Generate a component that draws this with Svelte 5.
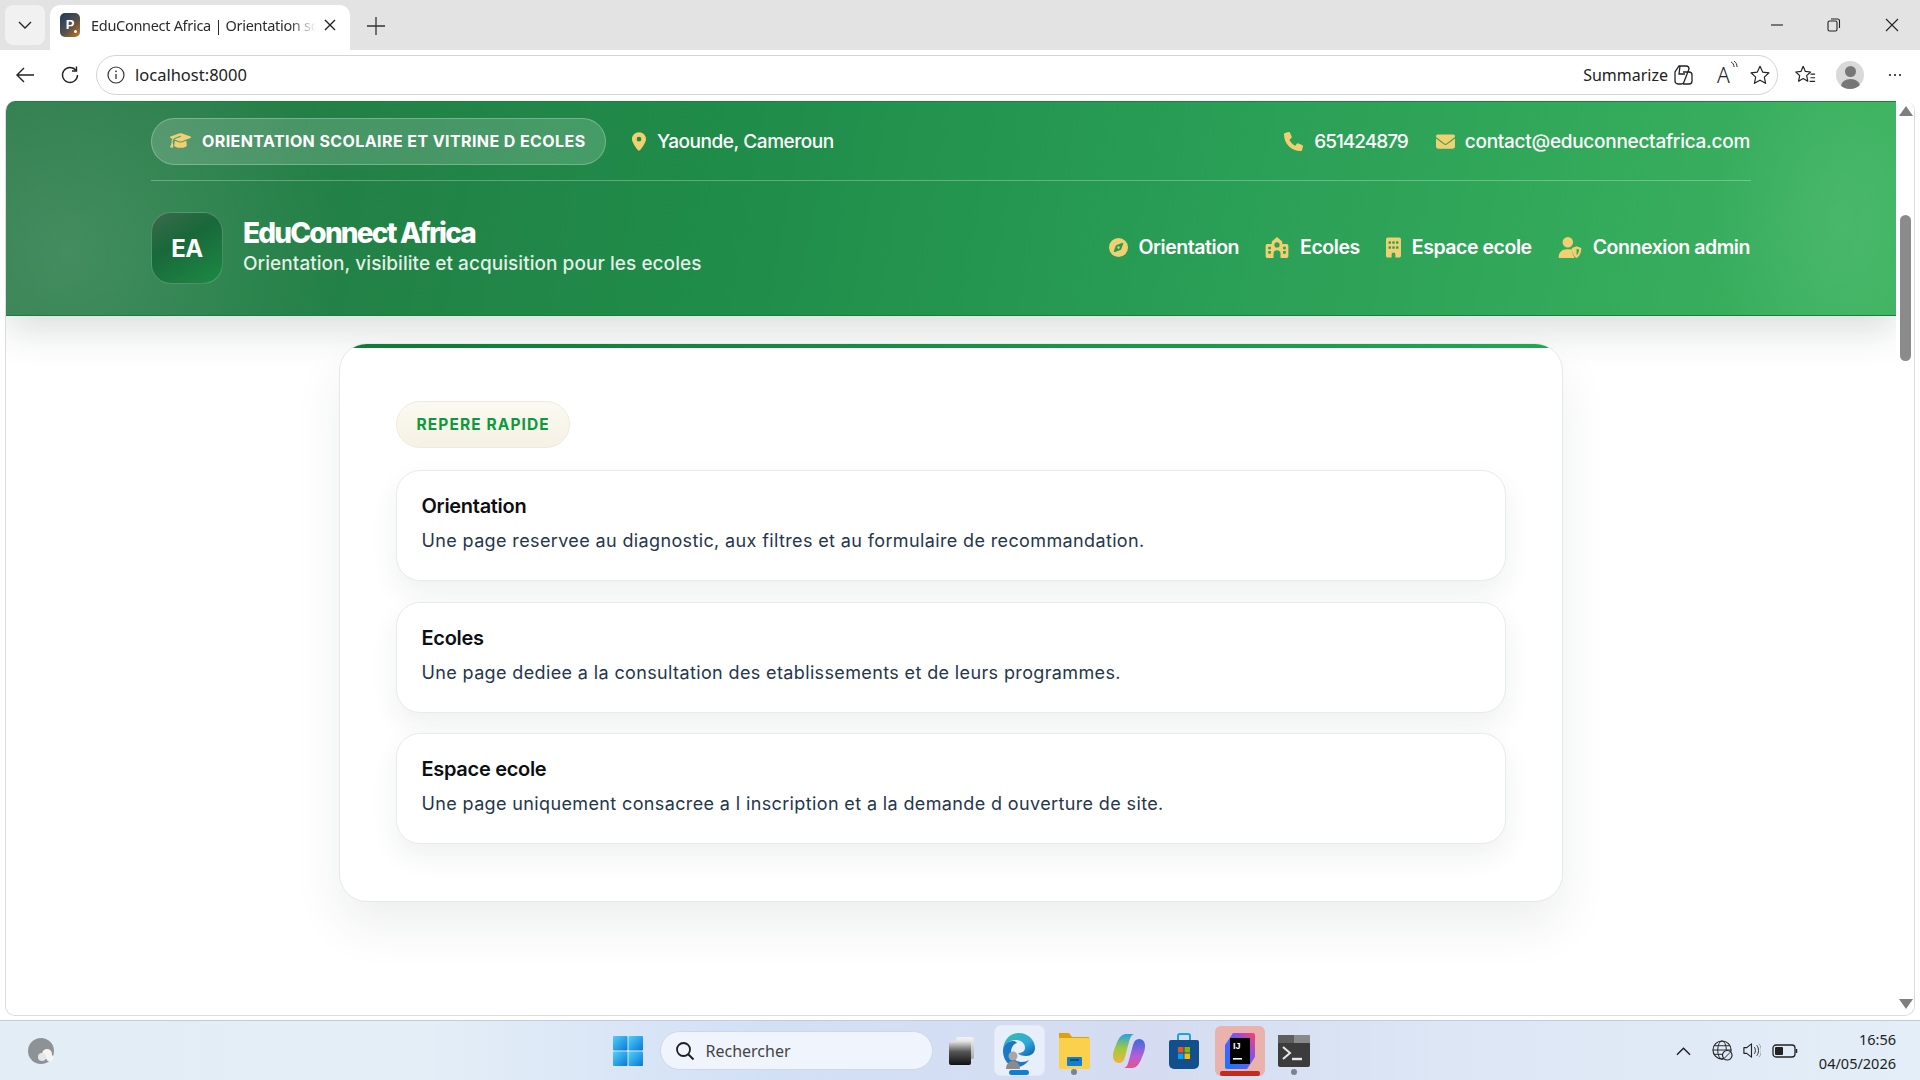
<script>
  const navLinks = [
    { label: 'Orientation', icon: 'compass' },
    { label: 'Ecoles', icon: 'school' },
    { label: 'Espace ecole', icon: 'building' },
    { label: 'Connexion admin', icon: 'admin' }
  ]

  const quickItems = [
    { title: 'Orientation', text: 'Une page reservee au diagnostic, aux filtres et au formulaire de recommandation.' },
    { title: 'Ecoles', text: 'Une page dediee a la consultation des etablissements et de leurs programmes.' },
    { title: 'Espace ecole', text: 'Une page uniquement consacree a l inscription et a la demande d ouverture de site.' }
  ]
</script>

{#snippet navIcon(name)}
  {#if name === 'compass'}
    <svg class="gold nav-ic" viewBox="0 0 512 512"><path d="M256 512A256 256 0 1 0 256 0a256 256 0 1 0 0 512zm50.7-186.9L162.4 380.6c-19.4 7.5-38.5-11.6-31-31l55.5-144.3c3.3-8.5 9.9-15.1 18.4-18.4l144.3-55.5c19.4-7.5 38.5 11.6 31 31L325.1 306.7c-3.2 8.5-9.9 15.1-18.4 18.4zM288 256a32 32 0 1 0 -64 0 32 32 0 1 0 64 0z" /></svg>
  {:else if name === 'school'}
    <svg class="gold nav-ic wide" viewBox="0 0 26 24"><path fill-rule="evenodd" d="M13 0l6 5v3h5a2 2 0 0 1 2 2v12a2 2 0 0 1-2 2h-7v-5a4 4 0 0 0-8 0v5H2a2 2 0 0 1-2-2V10a2 2 0 0 1 2-2h5V5zm0 6a3 3 0 1 0 0 6 3 3 0 0 0 0-6zM3 11v3h3v-3zm0 5v3h3v-3zm17-5v3h3v-3zm0 5v3h3v-3z" /></svg>
  {:else if name === 'building'}
    <svg class="gold nav-ic narrow" viewBox="0 0 384 512"><path d="M48 0C21.5 0 0 21.5 0 48V464c0 26.5 21.5 48 48 48h96V432c0-26.5 21.5-48 48-48s48 21.5 48 48v80h96c26.5 0 48-21.5 48-48V48c0-26.5-21.5-48-48-48H48zM64 240c0-8.8 7.2-16 16-16h32c8.8 0 16 7.2 16 16v32c0 8.8-7.2 16-16 16H80c-8.8 0-16-7.2-16-16V240zm112-16h32c8.8 0 16 7.2 16 16v32c0 8.8-7.2 16-16 16H176c-8.8 0-16-7.2-16-16V240c0-8.8 7.2-16 16-16zm80 16c0-8.8 7.2-16 16-16h32c8.8 0 16 7.2 16 16v32c0 8.8-7.2 16-16 16H272c-8.8 0-16-7.2-16-16V240zM80 96h32c8.8 0 16 7.2 16 16v32c0 8.8-7.2 16-16 16H80c-8.8 0-16-7.2-16-16V112c0-8.8 7.2-16 16-16zm80 16c0-8.8 7.2-16 16-16h32c8.8 0 16 7.2 16 16v32c0 8.8-7.2 16-16 16H176c-8.8 0-16-7.2-16-16V112zM272 96h32c8.8 0 16 7.2 16 16v32c0 8.8-7.2 16-16 16H272c-8.8 0-16-7.2-16-16V112c0-8.8 7.2-16 16-16z" /></svg>
  {:else}
    <svg class="gold nav-ic wide" viewBox="0 0 26 24"><circle cx="10.5" cy="6" r="6" /><path d="M9 14h3c1.200 0 2.300.2 3.300.5.1 3.300 1 6.600 3.300 9.500H1a1 1 0 0 1-1-1c0-5 4-9 9-9z" /><path d="M20.500 10.500l5.500 2.200c0 4.300-1.600 9-5.500 11.300-3.900-2.300-5.500-7-5.500-11.300zm0 3v7.400c1.800-1.500 2.800-3.900 3-6.300z" fill-rule="evenodd" /></svg>
  {/if}
{/snippet}

<div class="screen">
  <div class="tabstrip">
    <button class="tab-menu" aria-label="Tab actions">
      <svg viewBox="0 0 16 16" width="16" height="16"><path d="M2 5l6 6 6-6" fill="none" stroke="#222" stroke-width="1.300" /></svg>
    </button>
    <div class="tab">
      <span class="favicon">P<i></i></span>
      <span class="tab-title">EduConnect Africa | Orientation sc</span>
      <svg class="tab-close" viewBox="0 0 12 12" width="12" height="12"><path d="M1 1l10 10M11 1L1 11" stroke="#222" stroke-width="1.400" /></svg>
    </div>
    <svg class="new-tab" viewBox="0 0 18 18" width="18" height="18"><path d="M9 0v18M0 9h18" stroke="#333" stroke-width="1.300" /></svg>
    <div class="win-controls">
      <svg viewBox="0 0 12 12" width="12" height="12"><path d="M0 6h12" stroke="#222" stroke-width="1.100" /></svg>
      <svg viewBox="0 0 14 14" width="14" height="14"><rect x="1" y="3" width="9" height="10" rx="1.500" fill="none" stroke="#222" stroke-width="1.100" /><path d="M4 1h6.500A2 2 0 0 1 12.500 3v7" fill="none" stroke="#222" stroke-width="1.100" /></svg>
      <svg viewBox="0 0 14 14" width="14" height="14"><path d="M1 1l12 12M13 1L1 13" stroke="#222" stroke-width="1.100" /></svg>
    </div>
  </div>

  <div class="toolbar">
    <svg class="tool-ic" viewBox="0 0 20 20" width="20" height="20"><path d="M19 10H2M9 3l-7 7 7 7" fill="none" stroke="#222" stroke-width="1.400" /></svg>
    <svg class="tool-ic" viewBox="0 0 20 20" width="20" height="20"><path d="M16 5.500A7.500 7.500 0 1 0 17.500 10" fill="none" stroke="#222" stroke-width="1.400" /><path d="M16.500 1.500v4.500H12" fill="none" stroke="#222" stroke-width="1.400" /></svg>
    <div class="addressbar">
      <svg viewBox="0 0 18 18" width="18" height="18"><circle cx="9" cy="9" r="8" fill="none" stroke="#333" stroke-width="1.200" /><path d="M9 8v5" stroke="#333" stroke-width="1.300" /><circle cx="9" cy="5.300" r=".9" fill="#333" /></svg>
      <span class="url">localhost:8000</span>
      <span class="summarize">Summarize</span>
      <svg viewBox="0 0 24 24" width="24" height="24" class="copilot-line"><path d="M8 3h7a3 3 0 0 1 3 3l-5 13a3 3 0 0 1-3 2H7a3 3 0 0 1-3-3V9zM12 9h6a3 3 0 0 1 3 3v6a3 3 0 0 1-3 3h-6M9 3l-1 8h6" fill="none" stroke="#222" stroke-width="1.300" /></svg>
      <span class="read-aloud">A<svg viewBox="0 0 8 10" width="8" height="10"><path d="M1 1c2 1 3 2.500 3 5M4 0c2 1.500 3 3 3 6" fill="none" stroke="#333" /></svg></span>
      <svg viewBox="0 0 24 24" width="22" height="22"><path d="M12 2.500l2.900 6.300 6.900.8-5.100 4.700 1.400 6.800-6.100-3.400-6.100 3.400 1.400-6.800-5.100-4.700 6.900-.8z" fill="none" stroke="#222" stroke-width="1.300" stroke-linejoin="round" /></svg>
    </div>
    <svg class="fav-list" viewBox="0 0 24 24" width="22" height="22"><path d="M10 2.500l2.400 5.600 5.600.6-4.200 4 1.200 6.100-5-3-5 3 1.200-6.100-4.200-4 5.600-.6z" fill="none" stroke="#222" stroke-width="1.300" stroke-linejoin="round" /><path d="M18 11h5M18 15h5M17 19h6" stroke="#222" stroke-width="1.200" /></svg>
    <span class="avatar"><i></i><b></b></span>
    <svg class="dots" viewBox="0 0 14 4" width="14" height="4"><circle cx="2" cy="2" r="1.100" fill="#222" /><circle cx="7" cy="2" r="1.100" fill="#222" /><circle cx="12" cy="2" r="1.100" fill="#222" /></svg>
  </div>

  <div class="viewport">
    <div class="frame">
      <div class="page">
        <header class="site-header">
          <div class="header-inner">
            <div class="topline">
              <span class="badge">
                <svg class="gold cap" viewBox="0 0 640 512"><path d="M320 32c-8.100 0-16.100 1.400-23.700 4.100L15.800 137.400C6.300 140.900 0 149.900 0 160s6.300 19.100 15.800 22.600l57.900 20.900C57.300 229.300 48 259.800 48 291.900v28.100c0 28.400-10.800 57.700-22.300 80.800c-6.500 13-13.900 25.800-22.500 37.600C0 442.700-.9 448.300 .9 453.400s6 8.900 11.200 10.200l64 16c4.200 1.100 8.700 .3 12.400-2s6.300-6.100 7.100-10.400c8.600-42.800 4.300-81.200-2.100-108.700C90.300 344.300 86 329.800 80 316.500V291.900c0-30.200 10.200-58.700 27.900-81.500c12.900-15.500 29.600-28 49.200-35.700l157-61.700c8.200-3.200 17.500 .8 20.700 9s-.8 17.500-9 20.700l-157 61.700c-12.400 4.900-23.300 12.400-32.200 21.600l159.600 57.600c7.600 2.700 15.600 4.100 23.700 4.100s16.100-1.400 23.700-4.100L624.200 182.600c9.500-3.400 15.800-12.500 15.800-22.600s-6.300-19.100-15.800-22.600L343.700 36.100C336.100 33.400 328.100 32 320 32zM128 408c0 35.300 86 72 192 72s192-36.700 192-72L496.700 262.600 354.500 314c-11.100 4-22.800 6-34.500 6s-23.500-2-34.500-6L143.300 262.600 128 408z" /></svg>
                ORIENTATION SCOLAIRE ET VITRINE D ECOLES
              </span>
              <span class="info place">
                <svg class="gold pin" viewBox="0 0 384 512"><path d="M215.700 499.200C267 435 384 279.400 384 192C384 86 298 0 192 0S0 86 0 192c0 87.400 117 243 168.300 307.200c12.300 15.300 35.100 15.300 47.400 0zM192 128a64 64 0 1 1 0 128 64 64 0 1 1 0-128z" /></svg>
                Yaounde, Cameroun
              </span>
              <span class="info phone">
                <svg class="gold phone-ic" viewBox="0 0 512 512"><path d="M164.900 24.600c-7.700-18.600-28-28.500-47.400-23.200l-88 24C12.100 30.200 0 46 0 64C0 311.400 200.600 512 448 512c18 0 33.800-12.100 38.600-29.500l24-88c5.300-19.400-4.600-39.700-23.200-47.400l-96-40c-16.300-6.800-35.200-2.100-46.300 11.600L304.700 368C234.300 334.700 177.300 277.700 144 207.300L193.300 167c13.700-11.200 18.400-30 11.600-46.300l-40-96z" /></svg>
                651424879
              </span>
              <span class="info mail-item">
                <svg class="gold mail" viewBox="0 0 512 512"><path d="M48 64C21.500 64 0 85.500 0 112c0 15.100 7.100 29.300 19.200 38.400L236.800 313.600c11.400 8.500 27 8.500 38.400 0L492.800 150.400c12.100-9.100 19.200-23.300 19.200-38.400c0-26.500-21.500-48-48-48H48zM0 176V384c0 35.300 28.700 64 64 64H448c35.300 0 64-28.700 64-64V176L294.400 339.200c-22.800 17.100-54 17.100-76.800 0L0 176z" /></svg>
                contact@educonnectafrica.com
              </span>
            </div>
            <div class="brandline">
              <div class="logo">EA</div>
              <div class="brand-text">
                <div class="brand-name">EduConnect Africa</div>
                <div class="brand-sub">Orientation, visibilite et acquisition pour les ecoles</div>
              </div>
              <nav class="nav">
                {#each navLinks as link}
                  <span class="nav-link">{@render navIcon(link.icon)}{link.label}</span>
                {/each}
              </nav>
            </div>
          </div>
        </header>

        <main class="panel">
          <span class="eyebrow">REPERE RAPIDE</span>
          <div class="stack">
            {#each quickItems as item}
              <article class="quick">
                <h3>{item.title}</h3>
                <p>{item.text}</p>
              </article>
            {/each}
          </div>
        </main>
      </div>

      <div class="scrollbar">
        <span class="arrow up"></span>
        <span class="thumb"></span>
        <span class="arrow down"></span>
      </div>
    </div>
  </div>

  <div class="taskbar">
    <div class="task-left">
      <svg viewBox="0 0 28 28" width="28" height="28"><ellipse cx="13" cy="14" rx="13" ry="13" fill="#8d9297" /><circle cx="19" cy="17" r="5" fill="#f4f4f4" /><circle cx="14" cy="20" r="4" fill="#e6e6e6" /><circle cx="22" cy="21" r="3.500" fill="#f4f4f4" /></svg>
    </div>
    <div class="task-center">
      <svg class="start" viewBox="0 0 30 30" width="30" height="30">
        <defs>
          <linearGradient id="winA" x1="0" y1="0" x2="1" y2="1"><stop offset="0" stop-color="#4fd0f8" /><stop offset="1" stop-color="#0a78d8" /></linearGradient>
        </defs>
        <rect x="0" y="0" width="14.500" height="14.500" rx="1" fill="url(#winA)" />
        <rect x="15.500" y="0" width="14.500" height="14.500" rx="1" fill="url(#winA)" />
        <rect x="0" y="15.500" width="14.500" height="14.500" rx="1" fill="url(#winA)" />
        <rect x="15.500" y="15.500" width="14.500" height="14.500" rx="1" fill="url(#winA)" />
      </svg>
      <div class="search">
        <svg viewBox="0 0 20 20" width="20" height="20"><circle cx="8.500" cy="8.500" r="6.500" fill="none" stroke="#1e1e1e" stroke-width="1.800" /><path d="M13 13l5.500 5.500" stroke="#1e1e1e" stroke-width="2" /></svg>
        <span>Rechercher</span>
      </div>
      <span class="slot taskview"><i></i><b></b></span>
      <span class="slot edge">
        <svg viewBox="0 0 32 36" width="32" height="36">
          <defs>
            <linearGradient id="edgeA" x1="0" y1="0" x2="1" y2="1"><stop offset="0" stop-color="#35c1a2" /><stop offset=".6" stop-color="#2fa8de" /><stop offset="1" stop-color="#0c59a4" /></linearGradient>
          </defs>
          <path d="M16 0c9 0 16 7 16 15 0 5-4 8-9 8-4 0-7-1-8-3 4 0 7-2 7-5 0-4-3-8-9-8-7 0-13 5-13 11C0 7 7 0 16 0z" fill="url(#edgeA)" />
          <path d="M0 18c0-6 5-10 10-10 3 0 4 2 4 2-4 1-6 5-6 9 0 6 5 10 11 10 3 0 5-1 7-2-3 4-7 7-12 7C6 34 0 27 0 18z" fill="#1b78c8" />
          <circle cx="10" cy="23" r="4.500" fill="#a8a8a8" /><path d="M3 36c0-5 3-8 7-8s7 3 7 8z" fill="#8b8b8b" />
        </svg>
        <em class="run active"></em>
      </span>
      <span class="slot">
        <svg viewBox="0 0 32 36" width="32" height="36"><path d="M1 0h10l3 4h17v6H1z" fill="#dfa10b" /><rect x="1" y="5" width="31" height="31" rx="1" fill="#fbd04a" /><rect x="9" y="24" width="15" height="9" rx="1" fill="#0f7fd0" /><path d="M12 27h9" stroke="#083f78" stroke-width="1.500" /></svg>
        <em class="run"></em>
      </span>
      <span class="slot">
        <svg viewBox="0 0 32 36" width="32" height="36">
          <defs>
            <linearGradient id="copA" x1="0" y1="0" x2="0" y2="1"><stop offset="0" stop-color="#27a2e8" /><stop offset=".5" stop-color="#9fca3a" /><stop offset="1" stop-color="#f2b33d" /></linearGradient>
            <linearGradient id="copB" x1="0" y1="0" x2="0" y2="1"><stop offset="0" stop-color="#3b6be0" /><stop offset=".6" stop-color="#b65dd8" /><stop offset="1" stop-color="#e2548c" /></linearGradient>
          </defs>
          <path d="M13 1h8c-3 1-4 4-5 8l-4 15c-1 4-3 6-6 6-4 0-6-3-6-7 0-3 1-7 3-11 2-6 5-11 10-11z" fill="url(#copA)" />
          <path d="M19 35h-8c3-1 4-4 5-8l4-15c1-4 3-6 6-6 4 0 6 3 6 7 0 3-1 7-3 11-2 6-5 11-10 11z" fill="url(#copB)" />
        </svg>
      </span>
      <span class="slot">
        <svg viewBox="0 0 30 36" width="30" height="36"><path d="M9 8V3a2 2 0 0 1 2-2h8a2 2 0 0 1 2 2v5" fill="none" stroke="#19a6dc" stroke-width="2" /><path d="M2 7h26a2 2 0 0 1 2 2v22a5 5 0 0 1-5 5H5a5 5 0 0 1-5-5V9a2 2 0 0 1 2-2z" fill="#144f8d" /><rect x="9" y="14" width="5.500" height="5.500" fill="#f25022" /><rect x="15.500" y="14" width="5.500" height="5.500" fill="#7fba00" /><rect x="9" y="20.500" width="5.500" height="5.500" fill="#00a4ef" /><rect x="15.500" y="20.500" width="5.500" height="5.500" fill="#ffb900" /></svg>
      </span>
      <span class="slot idea">
        <svg viewBox="0 0 30 36" width="30" height="36">
          <defs>
            <linearGradient id="ijA" x1="0" y1="1" x2="1" y2="0"><stop offset="0" stop-color="#087cfa" /><stop offset=".55" stop-color="#6b57ff" /><stop offset="1" stop-color="#ff3d6e" /></linearGradient>
          </defs>
          <path d="M8 0h20a2 2 0 0 1 2 2v22l-8 12H2a2 2 0 0 1-2-2V12z" fill="url(#ijA)" />
          <rect x="5" y="5" width="20" height="26" fill="#000" />
          <text x="8" y="16" class="ij">IJ</text>
          <rect x="8" y="25" width="9" height="1.600" fill="#fff" />
        </svg>
        <em class="run red"></em>
      </span>
      <span class="slot last">
        <svg viewBox="0 0 32 32" width="32" height="32"><rect width="32" height="32" rx="2" fill="#3c3c3c" /><rect width="32" height="8" fill="#8a8a8a" /><rect width="16" height="8" fill="#5e5e5e" /><path d="M5 12l7 6-7 6" fill="none" stroke="#e8e8e8" stroke-width="2" /><path d="M14 24h10" stroke="#e8e8e8" stroke-width="2.400" /></svg>
        <em class="run"></em>
      </span>
    </div>
    <div class="task-right">
      <svg viewBox="0 0 16 10" width="15" height="10"><path d="M1 9l7-7 7 7" fill="none" stroke="#1e1e1e" stroke-width="1.500" /></svg>
      <svg class="tray-globe" viewBox="0 0 22 22" width="21" height="21"><circle cx="10.500" cy="10.500" r="9.500" fill="none" stroke="#222" stroke-width="1.200" /><ellipse cx="10.500" cy="10.500" rx="4.500" ry="9.500" fill="none" stroke="#222" /><path d="M1 10.500h19M2.500 6h16M2.500 15h11" stroke="#222" /><circle cx="16" cy="16" r="5" fill="#dde7f6" stroke="#222" stroke-width="1.200" /><path d="M13 19l6-6" stroke="#222" /></svg>
      <svg class="tray-sound" viewBox="0 0 20 20" width="19" height="19"><path d="M2 7v6h3l5 4V3L5 7z" fill="none" stroke="#222" stroke-width="1.200" stroke-linejoin="round" /><path d="M13 6.500c1.500 2 1.500 5 0 7M15.500 4.500c2.500 3 2.500 8 0 11" fill="none" stroke="#222" /><path d="M18 3c3 4 3 10 0 14" fill="none" stroke="#9aa3ad" /></svg>
      <svg class="tray-batt" viewBox="0 0 26 14" width="26" height="14"><rect x="1" y="1" width="22" height="12" rx="3" fill="none" stroke="#222" stroke-width="1.300" /><rect x="3" y="3" width="8" height="8" rx="1" fill="#222" /><path d="M24.500 5v4" stroke="#222" stroke-width="1.500" /></svg>
      <div class="clock"><span>16:56</span><span>04/05/2026</span></div>
    </div>
  </div>
</div>

<style>
  :global(body) {
    margin: 0;
    background: #fff;
  }
  .screen {
    width: 1920px;
    height: 1080px;
    display: flex;
    flex-direction: column;
    overflow: hidden;
    background: #fff;
    font-family: 'Noto Sans', 'Open Sans', sans-serif;
  }
  .tabstrip {
    height: 50px;
    flex: none;
    display: flex;
    align-items: flex-end;
    background: #e3e3e3;
    padding-left: 5px;
    box-sizing: border-box;
  }
  .tab-menu {
    width: 40px;
    height: 40px;
    margin: 0 5px 5px 0;
    border: 0;
    border-radius: 8px;
    background: #f1f1f1;
    display: flex;
    align-items: center;
    justify-content: center;
    padding: 0;
  }
  .tab {
    width: 300px;
    height: 45px;
    box-sizing: border-box;
    background: #fff;
    border-radius: 10px 10px 0 0;
    display: flex;
    align-items: center;
    padding: 0 14px 6px 10px;
    font-size: 14.500px;
    color: #2b2b2b;
  }
  .favicon {
    position: relative;
    flex: none;
    width: 20px;
    height: 24px;
    border-radius: 5px;
    background: linear-gradient(135deg, #1f3a5c, #55504a 55%, #c9771f);
    color: #fff;
    font: 700 13px 'Liberation Sans', sans-serif;
    line-height: 24px;
    text-align: center;
    margin-right: 11px;
  }
  .favicon i {
    position: absolute;
    right: 3px;
    bottom: 4px;
    width: 3px;
    height: 3px;
    background: #fff;
    border-radius: 50%;
  }
  .tab-title {
    flex: 1;
    min-width: 0;
    white-space: nowrap;
    letter-spacing: -0.3px;
    -webkit-mask-image: linear-gradient(90deg, #000 88%, transparent);
    mask-image: linear-gradient(90deg, #000 88%, transparent);
  }
  .tab-close {
    flex: none;
    margin-left: 8px;
  }
  .new-tab {
    margin: 0 0 15px 17px;
  }
  .win-controls {
    margin-left: auto;
    display: flex;
    align-items: center;
    gap: 44px;
    padding-right: 21px;
    height: 50px;
  }
  .toolbar {
    height: 51px;
    flex: none;
    box-sizing: border-box;
    background: #fff;
    display: flex;
    align-items: center;
    padding: 0 0 1px 15px;
  }
  .tool-ic {
    flex: none;
    margin-right: 25px;
  }
  .tool-ic + .tool-ic {
    margin-right: 16px;
  }
  .addressbar {
    width: 1682px;
    height: 40px;
    flex: none;
    box-sizing: border-box;
    border: 1px solid #d4d4d4;
    border-radius: 20px;
    display: flex;
    align-items: center;
    padding: 0 6px 0 10px;
    color: #222;
  }
  .url {
    margin-left: 10px;
    font-size: 16.500px;
    line-height: 20px;
    padding-bottom: 1px;
  }
  .summarize {
    margin-left: auto;
    font-size: 16px;
    letter-spacing: 0;
  }
  .copilot-line {
    margin: 0 22px 0 3px;
  }
  .read-aloud {
    display: flex;
    font-size: 21px;
    width: 28px;
    font-weight: 300;
    margin-right: 4px;
    color: #222;
  }
  .fav-list {
    margin-left: 16px;
    flex: none;
  }
  .avatar {
    position: relative;
    flex: none;
    width: 28px;
    height: 28px;
    border-radius: 50%;
    background: #d9d9d9;
    margin-left: 20px;
    overflow: hidden;
  }
  .avatar i {
    position: absolute;
    left: 9px;
    top: 5px;
    width: 11px;
    height: 11px;
    border-radius: 50%;
    background: #777;
  }
  .avatar b {
    position: absolute;
    left: 5px;
    top: 18px;
    width: 19px;
    height: 14px;
    border-radius: 50%;
    background: #777;
  }
  .dots {
    flex: none;
    margin-left: 24px;
  }
  .viewport {
    flex: 1;
    min-height: 0;
    padding: 0 5px 4px 5px;
    background: #fff;
    display: flex;
  }
  .frame {
    flex: 1;
    display: flex;
    min-width: 0;
    border: 1px solid #dcdcdc;
    border-top: 0;
    border-radius: 10px;
    overflow: hidden;
  }
  .page {
    flex: 1;
    min-width: 0;
    overflow: hidden;
    background: #fff;
    font-family: Inter, sans-serif;
  }
  .scrollbar {
    position: relative;
    width: 18px;
    flex: none;
    background: #fff;
  }
  .arrow {
    position: absolute;
    left: 3px;
    width: 0;
    height: 0;
    border-left: 7px solid transparent;
    border-right: 7px solid transparent;
  }
  .arrow.up {
    top: 5px;
    border-bottom: 10px solid #7f7f7f;
  }
  .arrow.down {
    bottom: 6px;
    border-top: 10px solid #7f7f7f;
  }
  .thumb {
    position: absolute;
    left: 4px;
    top: 114px;
    width: 11px;
    height: 146px;
    border-radius: 6px;
    background: #8b8b8b;
  }
  .site-header {
    position: relative;
    height: 215px;
    box-sizing: border-box;
    padding-top: 16px;
    color: #fff;
    border-top: 1px solid #14843a;
    border-bottom: 1px solid #14803a;
    background:
      radial-gradient(ellipse 280px 280px at 60px 150px, rgba(255, 255, 255, 0.13), transparent),
      radial-gradient(ellipse 130px 200px at 1835px 120px, rgba(255, 255, 255, 0.08), transparent),
      linear-gradient(100deg, #2a7a48 0%, #237f46 15%, #1f8c49 38%, #2a9f56 65%, #3cb35f 100%);
    box-shadow: 0 14px 36px rgba(20, 50, 35, 0.16);
  }
  .header-inner {
    width: 1600px;
    margin: 0 auto;
  }
  .topline {
    display: flex;
    align-items: center;
    height: 47px;
    font-size: 19px;
    font-weight: 500;
    padding-bottom: 15px;
    padding-right: 1px;
    border-bottom: 1px solid rgba(255, 255, 255, 0.28);
  }
  .gold {
    fill: #f2d071;
    flex: none;
    display: block;
  }
  .badge {
    box-sizing: border-box;
    display: flex;
    align-items: center;
    height: 47px;
    width: 455px;
    padding: 0 0 2px 18px;
    border-radius: 24px;
    border: 1px solid rgba(255, 255, 255, 0.26);
    background: rgba(255, 255, 255, 0.17);
    font-size: 16px;
    font-weight: 700;
    letter-spacing: 0.41px;
    white-space: nowrap;
  }
  .cap {
    width: 21px;
    height: 17px;
    margin-right: 11px;
  }
  .info {
    display: flex;
    align-items: center;
    white-space: nowrap;
  }
  .place {
    margin-left: 26px;
    margin-right: auto;
    letter-spacing: -0.45px;
  }
  .phone {
    margin-right: 28px;
    letter-spacing: -1px;
  }
  .mail-item {
    letter-spacing: -0.28px;
  }
  .pin {
    width: 14px;
    height: 19px;
    margin-right: 11px;
  }
  .phone-ic {
    width: 19px;
    height: 19px;
    margin-right: 11px;
  }
  .mail {
    width: 19px;
    height: 19px;
    margin-right: 10px;
  }
  .brandline {
    display: flex;
    align-items: center;
    margin-top: 31px;
  }
  .logo {
    width: 72px;
    height: 72px;
    box-sizing: border-box;
    flex: none;
    border-radius: 20px;
    border: 1px solid rgba(255, 255, 255, 0.22);
    background: linear-gradient(150deg, #3b6a4c 0%, #19683a 40%, #1c8a45 100%);
    display: flex;
    align-items: center;
    justify-content: center;
    font-size: 24px;
    font-weight: 700;
    letter-spacing: -0.6px;
  }
  .brand-text {
    margin: 0 0 2px 20px;
  }
  .brand-name {
    font-size: 28px;
    line-height: 34px;
    font-weight: 800;
    letter-spacing: -1.8px;
  }
  .brand-sub {
    font-size: 19px;
    line-height: 28px;
    font-weight: 500;
    color: rgba(255, 255, 255, 0.88);
    letter-spacing: 0.05px;
  }
  .nav {
    margin-left: auto;
    display: flex;
    align-items: center;
    gap: 26px;
    padding: 0 1px 2px 0;
  }
  .nav-link {
    display: flex;
    align-items: center;
    font-size: 19.500px;
    font-weight: 600;
    letter-spacing: -0.45px;
    white-space: nowrap;
  }
  .nav-ic {
    width: 19px;
    height: 19px;
    margin-right: 11px;
  }
  .nav-ic.wide {
    width: 24px;
    height: 21px;
    margin-right: 11px;
  }
  .nav-ic.narrow {
    width: 15px;
    height: 21px;
  }
  .panel {
    position: relative;
    display: block;
    box-sizing: border-box;
    width: 1224px;
    height: 559px;
    margin: 27px 0 0 332.500px;
    padding: 57px 56px 0;
    border: 1px solid #e6e8ea;
    border-radius: 28px;
    background: #fff;
    overflow: hidden;
    box-shadow: 0 24px 48px rgba(30, 50, 40, 0.08);
  }
  .panel::before {
    content: '';
    position: absolute;
    left: 0;
    right: 0;
    top: 0;
    height: 4px;
    background: linear-gradient(90deg, #0f7a35, #1fa850);
  }
  .eyebrow {
    display: inline-flex;
    align-items: center;
    box-sizing: border-box;
    height: 47px;
    padding: 0 19px 0 20px;
    border-radius: 24px;
    border: 1px solid #ecebdc;
    background: linear-gradient(180deg, #fbf9f2, #f6f1e4);
    color: #0d9a3c;
    font-size: 15.500px;
    font-weight: 700;
    letter-spacing: 1.100px;
  }
  .stack {
    margin-top: 22px;
    display: flex;
    flex-direction: column;
    gap: 20.500px;
  }
  .quick {
    box-sizing: border-box;
    height: 111px;
    padding: 23px 25px 0;
    border: 1px solid #e8eaec;
    border-radius: 24px;
    background: #fff;
    box-shadow: 0 12px 28px rgba(30, 40, 40, 0.07);
  }
  .quick h3 {
    margin: 0;
    font-size: 20px;
    line-height: 25px;
    font-weight: 600;
    letter-spacing: -0.3px;
    color: #0d0f12;
  }
  .quick p {
    margin: 9px 0 0;
    font-size: 18px;
    line-height: 26px;
    letter-spacing: 0.37px;
    color: #26364d;
  }
  .taskbar {
    height: 60px;
    flex: none;
    box-sizing: border-box;
    display: grid;
    grid-template-columns: 1fr auto 1fr;
    align-items: center;
    border-top: 1px solid #c6ccd6;
    background: linear-gradient(90deg, #e3edf6 0%, #e4eef7 22%, #d2e0f6 40%, #d5dcf1 60%, #dce6f5 75%, #e3eef8 100%);
  }
  .task-left {
    padding-left: 28px;
    display: flex;
  }
  .task-center {
    display: flex;
    align-items: center;
    height: 100%;
    padding-left: 11px;
  }
  .search {
    width: 273px;
    height: 39px;
    box-sizing: border-box;
    margin-left: 17px;
    margin-right: 4px;
    border: 1px solid #d0d7e4;
    border-radius: 20px;
    background: #f0f4fc;
    display: flex;
    align-items: center;
    padding-left: 14px;
    font-size: 16px;
    color: #444;
    gap: 11px;
  }
  .slot {
    position: relative;
    width: 49px;
    height: 49px;
    margin-right: 6px;
    border-radius: 6px;
    display: flex;
    align-items: center;
    justify-content: center;
  }
  .slot.last {
    margin-right: 0;
  }
  .taskview {
    margin-right: 9px;
  }
  .taskview i {
    position: absolute;
    left: 19px;
    top: 11px;
    width: 18px;
    height: 22px;
    background: linear-gradient(180deg, #f4f4f4, #a8a8a8);
    border-radius: 2px;
  }
  .taskview b {
    position: absolute;
    left: 12px;
    top: 15px;
    width: 22px;
    height: 24px;
    background: linear-gradient(180deg, #e8e8e8 0, #555 45%, #111);
    border-radius: 2px;
  }
  .edge {
    background: #e9eefb;
    box-shadow: 0 0 0 1px #e3e8f5;
  }
  .idea {
    background: #e9b2ad;
    margin: 0 5px 0 0;
    width: 50px;
    height: 50px;
  }
  .run {
    position: absolute;
    bottom: 0;
    left: 50%;
    width: 6px;
    height: 6px;
    margin-left: -3px;
    border-radius: 50%;
    background: #7a8190;
  }
  .run.active {
    width: 20px;
    height: 5px;
    margin-left: -10px;
    border-radius: 3px;
    background: #0f7fd4;
  }
  .run.red {
    width: 40px;
    height: 5px;
    margin-left: -20px;
    border-radius: 2px;
    background: #c42b1c;
  }
  .ij {
    font: 700 9px 'Liberation Sans', sans-serif;
    fill: #fff;
  }
  .task-right {
    display: flex;
    align-items: center;
    justify-content: flex-end;
    padding-right: 24px;
    color: #222;
  }
  .tray-globe {
    margin-left: 21px;
  }
  .tray-sound {
    margin-left: 9px;
  }
  .tray-batt {
    margin-left: 11px;
  }
  .clock {
    display: flex;
    flex-direction: column;
    align-items: flex-end;
    margin-left: 21px;
    font-size: 14.500px;
    line-height: 24px;
    color: #222;
  }
</style>
